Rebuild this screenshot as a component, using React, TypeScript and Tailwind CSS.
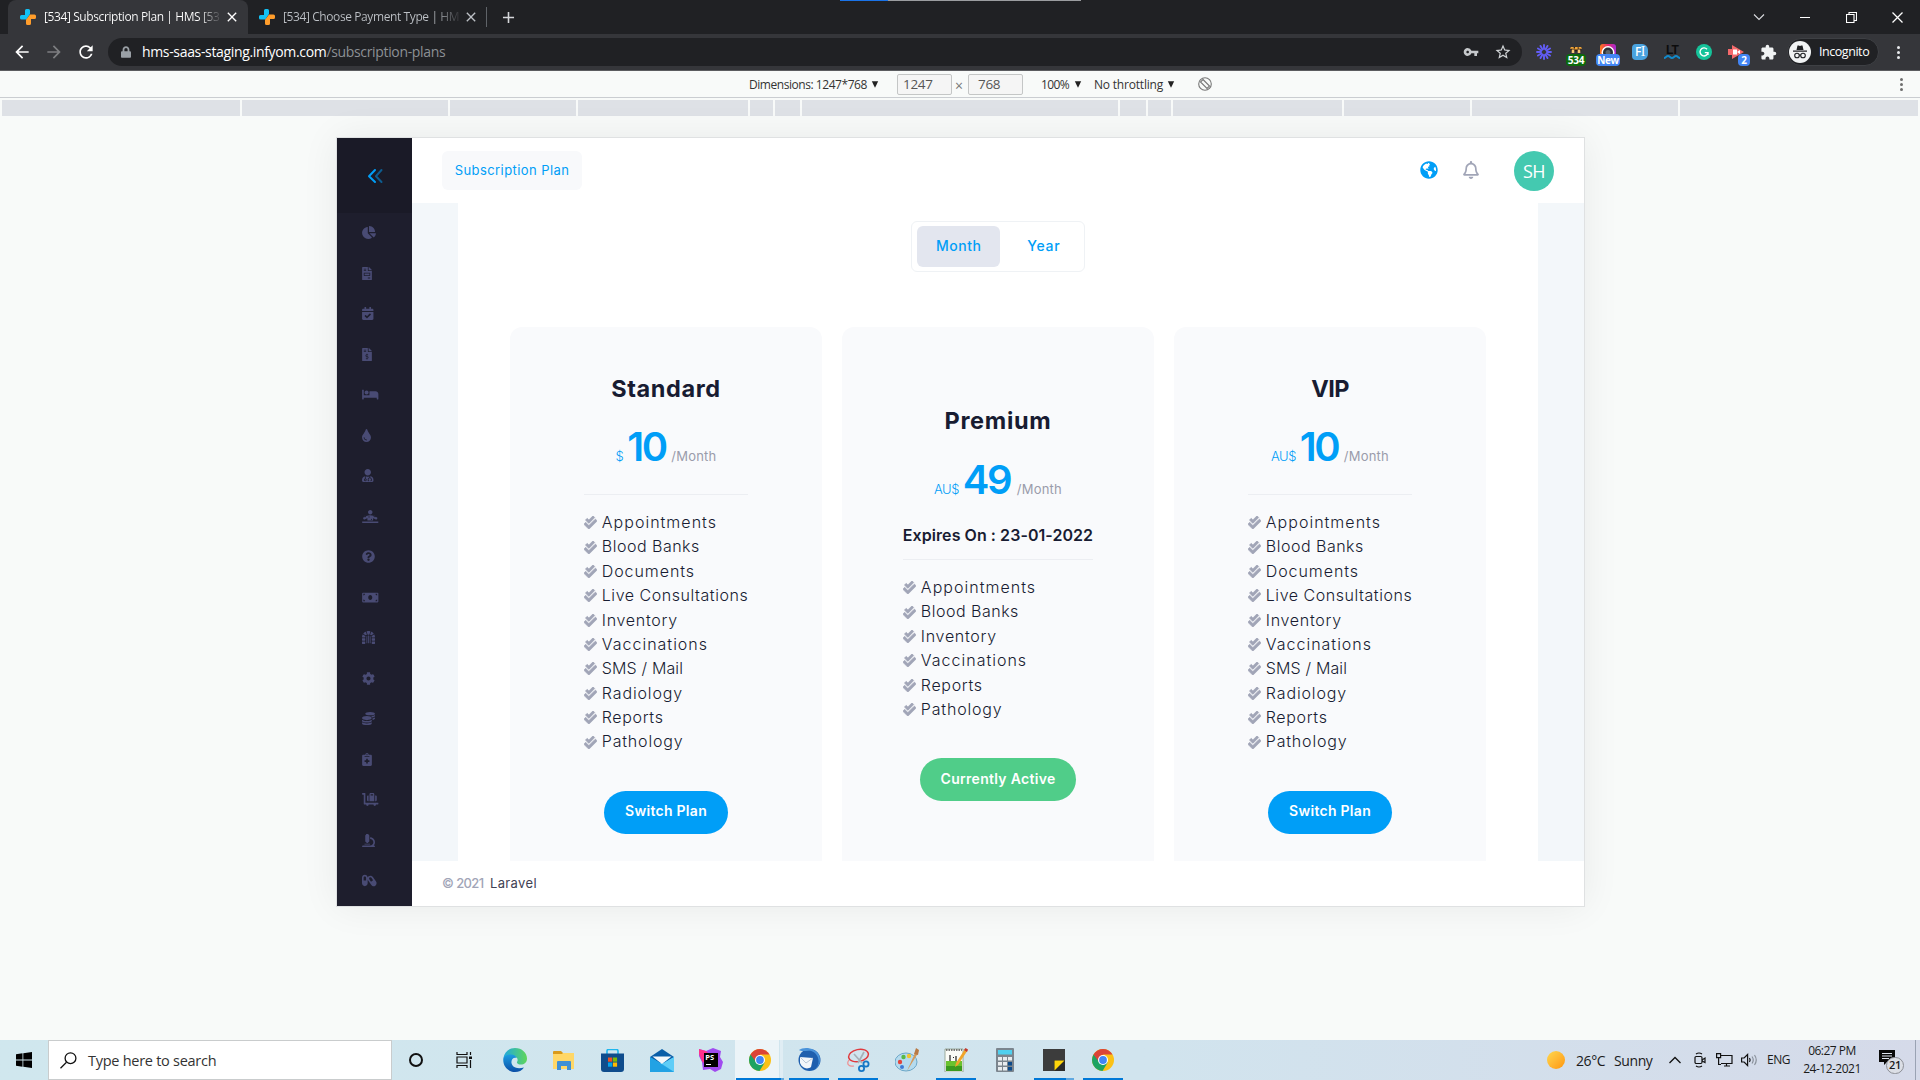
import type { ReactNode } from "react";
import type { IconType } from "react-icons";
import {
  FaChartPie, FaFileInvoice, FaCalendarCheck, FaFileInvoiceDollar, FaBed, FaTint, FaUserMd, FaDiagnoses,
  FaQuestionCircle, FaMoneyBill, FaDungeon, FaCog, FaCoins, FaNotesMedical, FaLuggageCart, FaMicroscope,
  FaCapsules, FaGlobeAmericas, FaRegBell, FaCheckDouble, FaLock,
} from "react-icons/fa";
import { MdArrowBack, MdArrowForward, MdRefresh, MdVpnKey, MdStarBorder, MdExtension, MdClose, MdAdd } from "react-icons/md";

const sideIcons: [IconType, string][] = [
  [FaChartPie, "w-[14px]"],
  [FaFileInvoice, "w-[10px]"],
  [FaCalendarCheck, "w-[11.5px]"],
  [FaFileInvoiceDollar, "w-[10px]"],
  [FaBed, "w-[16.5px]"],
  [FaTint, "w-[9px]"],
  [FaUserMd, "w-[11.5px]"],
  [FaDiagnoses, "w-[16.5px]"],
  [FaQuestionCircle, "w-[13px]"],
  [FaMoneyBill, "w-[16.5px]"],
  [FaDungeon, "w-[13px]"],
  [FaCog, "w-[13px]"],
  [FaCoins, "w-[13px]"],
  [FaNotesMedical, "w-[10px]"],
  [FaLuggageCart, "w-[16.5px]"],
  [FaMicroscope, "w-[13px]"],
  [FaCapsules, "w-[14.6px]"],
];

const tracking: Record<string, string> = {
  Appointments: "tracking-[1.02px]",
  "Blood Banks": "tracking-[0.5px]",
  Documents: "tracking-[0.92px]",
  "Live Consultations": "tracking-[0.54px]",
  Inventory: "tracking-[0.7px]",
  Vaccinations: "tracking-[1px]",
  "SMS / Mail": "tracking-[0.15px]",
  Radiology: "tracking-[0.88px]",
  Reports: "tracking-[0.65px]",
  Pathology: "tracking-[0.82px]",
};

interface Plan {
  name: string;
  nameClass: string;
  currency: string;
  amount: string;
  amountClass: string;
  expires?: string;
  features: string[];
  active?: boolean;
}

const full = ["Appointments", "Blood Banks", "Documents", "Live Consultations", "Inventory", "Vaccinations", "SMS / Mail", "Radiology", "Reports", "Pathology"];
const plans: Plan[] = [
  { name: "Standard", nameClass: "tracking-[0.6px]", currency: "$", amount: "10", amountClass: "w-[40px] tracking-[-2.6px]", features: full },
  { name: "Premium", nameClass: "tracking-[0.7px]", currency: "AU$", amount: "49", amountClass: "w-[50px] tracking-[-2.4px]", expires: "Expires On : 23-01-2022", features: ["Appointments", "Blood Banks", "Inventory", "Vaccinations", "Reports", "Pathology"], active: true },
  { name: "VIP", nameClass: "tracking-[-0.6px]", currency: "AU$", amount: "10", amountClass: "w-[40px] tracking-[-2.6px]", features: full },
];

function Favicon() {
  return (
    <svg className="h-4 w-4 shrink-0" viewBox="0 0 16 16">
      <path d="M6.500 0h2A1.500 1.500 0 0 1 10 1.500V5L6 11V10.500H1.500A1.500 1.500 0 0 1 0 9V7.500A1.500 1.500 0 0 1 1.500 6H5V1.500A1.500 1.500 0 0 1 6.500 0Z" fill="#12c2f5" />
      <path d="M9.500 16h-2A1.500 1.500 0 0 1 6 14.500V10.800L10 5.500H14.500A1.500 1.500 0 0 1 16 7V8.500A1.500 1.500 0 0 1 14.500 10H11V14.500A1.500 1.500 0 0 1 9.500 16Z" fill="#ff9d2b" />
    </svg>
  );
}

function TabStrip() {
  return (
    <div className="flex h-[34px] items-center bg-[#202124]">
      <div className="ml-2 flex h-full w-[240px] items-center rounded-t-lg bg-[#35363a] pl-3 text-white">
        <Favicon />
        <span className="ml-2 w-[176px] overflow-hidden whitespace-nowrap bg-gradient-to-r from-white from-88% to-[#4a4b4f] bg-clip-text text-xs tracking-[-0.4px] text-transparent">[534] Subscription Plan | HMS [53</span>
        <MdClose className="ml-1 h-4 w-4" />
      </div>
      <div className="ml-[11px] flex h-full w-[228px] items-center border-r border-transparent text-[#bdc1c6]">
        <Favicon />
        <span className="ml-2 w-[176px] overflow-hidden whitespace-nowrap bg-gradient-to-r from-[#bdc1c6] from-85% to-[#35363a] bg-clip-text text-xs tracking-[-0.4px] text-transparent">[534] Choose Payment Type | HM</span>
        <MdClose className="ml-1 h-4 w-4" />
      </div>
      <div className="-ml-px h-5 w-px bg-[#5f6368]" />
      <MdAdd className="ml-3 h-[19px] w-[19px] text-[#d5d7da]" />
      <div className="ml-auto flex items-center pr-[17px] text-white">
        <svg width="12" height="8" viewBox="0 0 12 8" className="mr-[35px]" fill="none" stroke="#dadce0" strokeWidth="1.1"><path d="M1 1.500 6 6.500 11 1.500" /></svg>
        <div className="mr-[36px] h-px w-[10px] bg-white" />
        <svg width="11" height="11" viewBox="0 0 11 11" className="mr-[35px]" fill="none" stroke="#fff" strokeWidth="1.1"><path d="M.5 2.500h7.500v8H.5zM3 2.500V.5h7.500v8H8" /></svg>
        <svg width="11" height="11" viewBox="0 0 11 11" fill="none" stroke="#fff" strokeWidth="1.300"><path d="m.5.5 10 10M10.500.5l-10 10" /></svg>
      </div>
    </div>
  );
}

function ExtSlot({ children }: { children: ReactNode }) {
  return <div className="relative flex h-7 w-8 items-center justify-center">{children}</div>;
}

function Toolbar() {
  return (
    <div className="flex h-[37px] items-center border-b border-[#5b5c60] bg-[#35363a] pl-3">
      <MdArrowBack className="h-5 w-5 text-white" />
      <MdArrowForward className="ml-3 h-5 w-5 text-[#7d7e81]" />
      <MdRefresh className="ml-3 h-5 w-5 text-white" />
      <div className="ml-3 flex h-7 w-[1414px] items-center rounded-full bg-[#202124] pl-[13px] pr-[10px]">
        <FaLock className="h-[12px] w-[10px] text-[#9aa0a6]" />
        <span className="ml-[11px] text-sm tracking-[-0.34px] text-white">hms-saas-staging.infyom.com<span className="text-[#8c9094]">/subscription-plans</span></span>
        <MdVpnKey className="ml-auto h-4 w-4 text-[#c6c9cc]" />
        <MdStarBorder className="ml-[15px] h-[18px] w-[18px] text-[#d0d3d6]" />
      </div>
      <div className="ml-[6px] flex">
        <ExtSlot>
          <svg width="16" height="16" viewBox="-8 -8 16 16" stroke="#625df5" strokeWidth="1.900" strokeLinecap="round">
            {[0, 30, 60, 90, 120, 150].map((a) => <path key={a} d="M0-7V-3M0 3V7" transform={`rotate(${a})`} />)}
          </svg>
        </ExtSlot>
        <ExtSlot>
          <svg width="12" height="8" viewBox="0 0 14 9" className="-mt-1"><path d="M1 1h12v5H1z" fill="#2b1a10" /><path d="M1 1h3l1 2H0zM6 1h3v3H5zM10 1h3l1 2h-4z" fill="#f2a73b" /><path d="M2 4h3v4H2zM9 4h3v4H9z" fill="#f7c977" /></svg>
          <span className="absolute left-1.5 top-4 flex h-3 w-5 items-center justify-center rounded-sm bg-[#0b6b0b] text-[10px] font-bold tracking-[-0.3px] text-white">534</span>
        </ExtSlot>
        <ExtSlot>
          <svg width="16" height="16" viewBox="0 0 16 16"><defs><linearGradient id="insta" x1="0" x2="1"><stop stopColor="#ff7a1a" /><stop offset=".5" stopColor="#e8286f" /><stop offset="1" stopColor="#a32cd6" /></linearGradient></defs><rect width="16" height="16" rx="3" fill="url(#insta)" /><circle cx="8" cy="8.500" r="6.500" fill="#fff" /><circle cx="8" cy="8.500" r="5" fill="#2c3137" /><circle cx="8" cy="8.500" r="2.500" fill="#5b636c" /></svg>
          <span className="absolute left-1 top-4 flex h-3 w-6 items-center justify-center rounded-sm bg-[#4285f4] text-[10px] font-bold tracking-[-0.3px] text-white">New</span>
        </ExtSlot>
        <ExtSlot>
          <div className="flex h-4 w-4 items-center justify-center rounded-l-sm rounded-r-md bg-[#4aa3df] text-xs font-semibold tracking-[-0.5px] text-white">F<span className="font-['Liberation_Serif'] text-[14px] font-normal">I</span></div>
        </ExtSlot>
        <ExtSlot>
          <div className="flex flex-col items-center font-['Liberation_Sans'] text-[12px] font-bold leading-[10px] tracking-[-1px] text-[#0c0c0d]">LT
            <svg width="16" height="4" viewBox="0 0 16 4" fill="none" stroke="#1289c9" strokeWidth="1.800"><path d="M0 3c2 0 2-2 4-2s2 2 4 2 2-2 4-2 2 2 4 2" /></svg>
          </div>
        </ExtSlot>
        <ExtSlot>
          <svg width="16" height="16" viewBox="0 0 16 16"><circle cx="8" cy="8" r="8" fill="#15c39a" /><path d="M11 5.200A4 4 0 1 0 12 8.600H8.800M12 8.600v2.400" fill="none" stroke="#fff" strokeWidth="1.400" /></svg>
        </ExtSlot>
        <ExtSlot>
          <svg width="16" height="14" viewBox="0 0 16 14"><path d="M0 4h4V0l12 7-12 7v-4H0z" fill="#f4696b" /><path d="M5 4.500h4v5H5z" fill="#fff" /><path d="M9 7l3-2v4z" fill="#fff" /></svg>
          <span className="absolute left-[18px] top-4 flex h-3 w-3 items-center justify-center rounded-sm bg-[#4285f4] text-[10px] font-bold text-white">2</span>
        </ExtSlot>
        <ExtSlot><MdExtension className="h-[17px] w-[17px] text-[#f1f3f4]" /></ExtSlot>
      </div>
      <div className="ml-[3px] flex h-7 w-[92px] items-center rounded-full border border-[#3e4044] bg-[#202124] pl-px">
        <svg width="22" height="22" viewBox="0 0 22 22"><circle cx="11" cy="11" r="11" fill="#f1f3f4" /><path d="M7.500 9 8.500 4.500h1.200L11 5l1.300-.5h1.200l1 4.500zM4 9.500h14v1.200H4z" fill="#202124" /><g fill="none" stroke="#202124" strokeWidth="1.100"><circle cx="8" cy="14.500" r="2.300" /><circle cx="14" cy="14.500" r="2.300" /><path d="M10.300 14.200q.7-.5 1.400 0" /></g></svg>
        <span className="ml-2 text-[12.5px] tracking-[-0.45px] text-white">Incognito</span>
      </div>
      <div className="ml-[18px] flex flex-col gap-[2px]">{[0, 1, 2].map((i) => <span key={i} className="h-[3px] w-[3px] rounded-full bg-[#e8eaed]" />)}</div>
    </div>
  );
}

const Caret = ({ className }: { className: string }) => (
  <svg width="8" height="7" viewBox="0 0 8 7" className={className}><path d="M.8.3h6.400L4 6.800z" fill="#222" /></svg>
);

function DeviceBar() {
  return (
    <div className="flex h-[27px] items-center border-b border-[#cacdd1] pl-[749px] text-xs text-[#333]">
      <span className="w-[122px] whitespace-nowrap pt-px tracking-[-0.45px]">Dimensions: 1247*768</span>
      <Caret className="w-2" />
      <div className="ml-[18px] h-[21px] w-[55px] rounded-xs border border-[#c4c6c6] bg-[#f5f5f5] pl-[5px] text-[13.5px] leading-[18px] tracking-[-0.3px] text-[#555]">1247</div>
      <span className="mx-px mt-1 w-3 text-center text-sm leading-4 text-[#777]">×</span>
      <div className="ml-0.5 h-[21px] w-[55px] rounded-xs border border-[#c4c6c6] bg-[#f5f5f5] pl-[9px] text-[13.5px] leading-[18px] tracking-[-0.3px] text-[#555]">768</div>
      <span className="ml-[18px] w-[33px] pt-px tracking-[-0.6px]">100%</span>
      <Caret className="w-2" />
      <span className="ml-3 w-[73px] whitespace-nowrap pt-px tracking-[-0.2px]">No throttling</span>
      <Caret className="w-2" />
      <svg width="14" height="14" viewBox="0 0 14 14" className="ml-[23px]" fill="none" stroke="#777" strokeWidth="1.100"><circle cx="7" cy="7" r="6.300" /><path d="m5 2.500 6.500 6.500-2.500 2.500L2.500 5z" /></svg>
      <div className="ml-auto mr-[17px] flex flex-col gap-[2px]">{[0, 1, 2].map((i) => <span key={i} className="h-[3px] w-[3px] rounded-full bg-[#6e6e6e]" />)}</div>
    </div>
  );
}

const rulerSegments = [238, 206, 126, 170, 23, 25, 316, 26, 23, 169, 126, 206, 238];

function Ruler() {
  return (
    <div className="mt-[2px] flex h-4 gap-[2px] px-[2px]">
      {rulerSegments.map((w, i) => <div key={i} className="bg-[#dee1e6]" style={{ width: w }} />)}
    </div>
  );
}

function Sidebar() {
  return (
    <div className="w-[75px] bg-[#1e1e2d]">
      <div className="flex h-[75px] items-center justify-center bg-[#1a1a27]">
        <svg width="16" height="16" viewBox="0 0 16 16" className="ml-px" fill="none" stroke="#009ef7" strokeWidth="2" strokeLinecap="round" strokeLinejoin="round">
          <path d="M8 2 2 8.200 8 14" /><path d="M14.500 2 9 8.200 14.500 14" opacity=".5" />
        </svg>
      </div>
      {sideIcons.map(([Icon, width], i) => (
        <div key={i} className="flex h-[40.5px] items-center pb-px pl-[25px] text-[#494b74]"><Icon className={`h-[13px] ${width}`} /></div>
      ))}
    </div>
  );
}

function PlanCard({ plan }: { plan: Plan }) {
  return (
    <div className={`flex w-[312px] flex-col items-center rounded-t-xl bg-[#f9fafc] ${plan.active ? "pt-[80px]" : "pt-[48px]"}`}>
      <h2 className={`text-[23.5px] font-bold leading-7 text-[#181c32] ${plan.nameClass}`}>{plan.name}</h2>
      <div className="flex flex-col">
        <div className={`flex h-12 items-baseline justify-center leading-[48px] text-[#009ef7] ${plan.active ? "mt-[21px]" : "mt-5"}`}>
          <span className="mr-1 text-[13px] font-light tracking-[-0.5px]">{plan.currency}</span>
          <span className={`text-[40px] font-semibold ${plan.amountClass}`}>{plan.amount}</span>
          <span className="ml-1 text-[13px] tracking-[0.2px] text-[#9a9cab]">/Month</span>
        </div>
        {plan.expires && <div className="mt-[19px] whitespace-nowrap text-base font-semibold leading-6 tracking-[0.06px] text-[#181c32]">{plan.expires}</div>}
        <div className={`h-px w-full bg-[#eceef2] ${plan.active ? "mt-3" : "mt-[23px]"}`} />
        <ul className="mt-[15px] text-base font-light leading-[24.375px] text-[#181c32]">
          {plan.features.map((f) => (
            <li key={f} className="flex items-center whitespace-nowrap">
              <FaCheckDouble className="mr-[5px] mt-px h-[13px] w-[13px] text-[#a1a5b7]" stroke="currentColor" strokeWidth="28" />
              <span className={tracking[f]}>{f}</span>
            </li>
          ))}
        </ul>
      </div>
      {plan.active ? (
        <button className="mt-[37px] flex h-[43px] w-[156px] items-center justify-center rounded-[22px] bg-[#50cd89] pb-[2px] text-sm font-semibold tracking-[0.3px] text-white">Currently Active</button>
      ) : (
        <button className="mt-[37px] flex h-[43px] w-[124px] items-center justify-center rounded-[22px] bg-[#009ef7] pb-[3px] text-sm font-semibold tracking-[0.28px] text-white">Switch Plan</button>
      )}
    </div>
  );
}

function HmsApp() {
  return (
    <div className="ml-[337px] mt-[22px] flex h-[768px] w-[1247px] bg-white font-[Inter,sans-serif] shadow-[0_0_0_1px_#dfe1e2,0_0_36px_rgba(0,0,0,0.07)]">
      <Sidebar />
      <div className="flex flex-1 flex-col">
        <header className="flex h-[65px] items-center px-[30px]">
          <div className="flex h-[39px] w-[140px] items-center justify-center rounded-md bg-[#f8f9fb] text-[13px] tracking-[0.42px] text-[#009ef7]">Subscription Plan</div>
          <FaGlobeAmericas className="-mt-px ml-auto h-[18px] w-[18px] text-[#009ef7]" />
          <FaRegBell className="-mt-px ml-6 h-[18px] w-[18px] text-[#a1a5b7]" />
          <div className="ml-[34px] mt-px flex h-10 w-10 items-center justify-center rounded-full bg-[#44c9b0] font-['Open_Sans'] text-lg tracking-[-0.6px] text-white">SH</div>
        </header>
        <main className="flex h-[658px] flex-col overflow-hidden bg-[#f3f7fa] px-[46px]">
          <div className="flex flex-1 flex-col items-center bg-white">
            <div className="mt-[18px] flex h-[51px] w-[174px] shrink-0 items-center rounded-md border border-[#eff2f5] pl-[5px] text-sm font-medium text-[#009ef7]">
              <div className="flex h-[41px] w-[84px] items-center justify-center rounded-md bg-[#e3e6ef] pb-0.5 tracking-[0.5px]">Month</div>
              <div className="flex h-[41px] w-[84px] items-center justify-center pb-0.5 pl-[3px] tracking-[0.7px]">Year</div>
            </div>
            <div className="mt-[55px] flex flex-1 gap-5">{plans.map((p) => <PlanCard key={p.name} plan={p} />)}</div>
          </div>
        </main>
        <footer className="flex flex-1 items-center pl-[30px] text-[13px] font-medium">
          <span className="w-[48px] tracking-[-0.6px] text-[#a1a5b7]">© 2021</span>
          <span className="font-normal tracking-[0.35px] text-[#3f4254]">Laravel</span>
        </footer>
      </div>
    </div>
  );
}

function Chrome() {
  return (
    <svg width="22" height="22" viewBox="0 0 22 22">
      <circle cx="11" cy="11" r="11" fill="#fbc116" />
      <path d="M11 11 1.500 5.500A11 11 0 0 0 10.500 22l5.200-8.500z" fill="#1da362" />
      <path d="M1.500 5.500A11 11 0 0 1 20.500 5.500H11L7 13z" fill="#db4437" />
      <circle cx="11" cy="11" r="5" fill="#fff" /><circle cx="11" cy="11" r="3.900" fill="#4285f4" />
    </svg>
  );
}

const taskIcons: { icon: ReactNode; state?: "open" | "front" | "stack" }[] = [
  { icon: <svg width="14" height="16" viewBox="0 0 14 16" className="-ml-0.5"><circle cx="7" cy="8" r="6" fill="none" stroke="#111" strokeWidth="2" /></svg> },
  { icon: <svg width="16" height="16" viewBox="0 0 16 16" className="-ml-1" fill="none" stroke="#111" strokeWidth="1.200"><path d="M1 0v2.500h10V0M1 16v-2.500h10V16M1 5h10v6H1zM14.500 0v3M14.500 8v8" /><path d="M13 4.500h3v2.500h-3z" fill="#111" stroke="none" /></svg> },
  { icon: <svg width="24" height="24" viewBox="0 0 24 24"><defs><linearGradient id="edgeTop"><stop stopColor="#1fa8e0" /><stop offset="1" stopColor="#5fd65a" /></linearGradient><linearGradient id="edgeLow" x2="0" y2="1"><stop stopColor="#1b9de2" /><stop offset="1" stopColor="#0c4fa6" /></linearGradient></defs><path d="M.4 10C1.500 4 6.300 0 12 0c7 0 12 5 12 10.500 0 4-3 6-6 6-2.500 0-4.500-1-4-2.500 1.500-2 .5-5.500-3.500-6C6 7.500 2 8.500.4 10z" fill="url(#edgeTop)" /><path d="M.4 10C2 7.500 5 6.500 8 6.500c3 0 5 1.500 5.800 3.500C10 9 8 12 8.500 15c.7 4 5 6.500 12.500 4.500C19 22.500 15.800 24 12 24 5 24-.8 18 .4 10z" fill="url(#edgeLow)" /></svg> },
  { icon: <svg width="21" height="19" viewBox="0 0 21 19"><path d="M0 1a1 1 0 0 1 1-1h7l2 2v3H0z" fill="#d99a1b" /><path d="M0 3h9l1-1h11v16H0z" fill="#ffd767" /><path d="M4 19v-8a1 1 0 0 1 1-1h12a1 1 0 0 1 1 1v8h-4v-4H8v4z" fill="#3f90d6" /></svg> },
  { icon: <svg width="23" height="23" viewBox="0 0 23 23"><path d="M6 5V2a1.500 1.500 0 0 1 1.500-1.500h8A1.500 1.500 0 0 1 17 2v3" fill="none" stroke="#1fb6ee" strokeWidth="1.600" /><path d="M0 4.500h23V20a3 3 0 0 1-3 3H3a3 3 0 0 1-3-3z" fill="#0f4c8c" /><path d="M7 8.500h4.200v4.200H7z" fill="#f25022" /><path d="M11.900 8.500h4.200v4.200h-4.200z" fill="#7fba00" /><path d="M7 13.500h4.200v4.200H7z" fill="#00a4ef" /><path d="M11.900 13.500h4.200v4.200h-4.200z" fill="#ffb900" /></svg> },
  { icon: <svg width="24" height="23" viewBox="0 0 24 23"><path d="M0 8 12 0l12 8v6H0z" fill="#0a5ea8" /><path d="M2.500 7.500h19L12 15z" fill="#f4f8fb" /><path d="M0 8l12 7 12-7v15H0z" fill="#2bb4ee" /><path d="M12 15 24 8v15z" fill="#5fcdf7" /><path d="m0 8 24 15H0z" fill="#1c93dc" opacity=".55" /></svg> },
  { icon: <svg width="24" height="24" viewBox="0 0 24 24"><path d="m0 1 7 2 7-3 8 3-1 6 3 5-2 7-6 3-5-3-7 1-1-8-3-6z" fill="#a04bf0" /><path d="m0 1 7 2 3 3-6 9-1-2-3-7z" fill="#ff318c" /><path d="M5 5h14v14H5z" fill="#000" /><text x="6.300" y="12" fill="#fff" fontSize="7.500" fontWeight="700" fontFamily="Open Sans">PS</text><path d="M7 16h5v1H7z" fill="#fff" /></svg> },
  { icon: <Chrome />, state: "front" },
  { icon: <svg width="24" height="24" viewBox="0 0 24 24"><circle cx="12.500" cy="12" r="11" fill="#1f5fae" /><path d="M2 2c4 3 11-2 16 3s5 13-1 17C25 17 25 6 17 2 11-1 5 0 2 2z" fill="#4a93da" /><path d="m3 9 13 1-2 9c-4 3-9 1-11-4z" fill="#f3f6fa" /><path d="m3 9 6 6 7-5" fill="none" stroke="#b9c8d8" /></svg>, state: "open" },
  { icon: <svg width="24" height="24" viewBox="0 0 24 24" fill="none"><ellipse cx="12.500" cy="7.500" rx="10" ry="6" transform="rotate(-12 12.500 7.500)" stroke="#e03a3e" strokeWidth="1.500" /><path d="M3 12c-3 4 0 7 5 6" stroke="#ef8f91" strokeWidth="1.200" /><path d="m8 6 8 9M18 4 12 15" stroke="#a8b0b8" strokeWidth="1.700" /><circle cx="20" cy="16" r="2.600" stroke="#1677c5" strokeWidth="1.800" /><circle cx="15.500" cy="20.500" r="2.600" stroke="#1677c5" strokeWidth="1.800" /></svg>, state: "open" },
  { icon: <svg width="24" height="24" viewBox="0 0 24 24"><ellipse cx="11" cy="14" rx="11" ry="9" fill="#b5dbee" stroke="#6ca7c8" /><circle cx="5" cy="14" r="2.200" fill="#e2453c" /><circle cx="8.500" cy="9" r="2.200" fill="#58b946" /><circle cx="14" cy="8" r="2.200" fill="#f3c330" /><circle cx="7" cy="19" r="2" fill="#3d7bd6" /><path d="m12 23 8-18 2.500 1z" fill="#d49a5b" /><path d="m19 6 2-6 3 2-1 5z" fill="#b97a45" /></svg> },
  { icon: <svg width="24" height="24" viewBox="0 0 24 24"><path d="M1 1h18v23H1z" fill="#fbfcf7" stroke="#8a9a86" strokeWidth=".8" /><path d="M2 13h16v10H2z" fill="#6ac22f" /><path d="M2 18h16v5H2z" fill="#3a9a1f" /><path d="M2 2h16" stroke="#555" strokeWidth="1.500" strokeDasharray="1.500 1" /><path d="M6 7v6M9 9.500h1M12 8v5" stroke="#222" strokeWidth="1.200" /><path d="m11 19 1-4L21 1l2.500 1.500L14 17z" fill="#f0a52a" /><path d="m20 2 1.500-2L24 1.500 23 4z" fill="#c23b2e" /></svg>, state: "open" },
  { icon: <svg width="18" height="24" viewBox="0 0 18 24"><rect width="18" height="24" rx="1" fill="#7b858e" /><path d="M2 2h14v4.500H2z" fill="#4fd0ef" />{[9, 14, 19].map((y) => [2, 7, 12].map((x) => <path key={`${x}-${y}`} d={`M${x} ${y}h4v3.500h-4z`} fill={x === 12 && y > 9 ? "#0c4a8a" : "#e8ecef"} />))}</svg> },
  { icon: <svg width="22" height="22" viewBox="0 0 22 22"><path d="M0 0h22v11L11 22H0z" fill="#3c3c3c" /><path d="M11 11h11v11H11z" fill="#2a2a2a" /><path d="M11.500 11.500H21.500L11.500 21.500z" fill="#ffd60a" /></svg>, state: "stack" },
  { icon: <Chrome />, state: "open" },
];

function Taskbar() {
  return (
    <div className="mt-auto flex h-10 items-center bg-gradient-to-r from-[#d0e7ee] via-[#d1e4ee] via-60% to-[#d5dae9] text-[#1b1b1b]">
      <div className="flex w-12 justify-center">
        <svg width="16" height="16" viewBox="0 0 16 16"><path d="M0 2.200 6.500 1.300V7.600H0zM7.300 1.200 16 0V7.600H7.300zM0 8.400H6.500V14.700L0 13.800zM7.300 8.400H16V16L7.300 14.800z" fill="#000" /></svg>
      </div>
      <div className="flex h-10 w-[344px] items-center border border-[#c9cccd] bg-white pl-[11px] text-[14.5px] tracking-[-0.27px] text-[#333]">
        <svg width="17" height="17" viewBox="0 0 17 17" fill="none" stroke="#111" strokeWidth="1.300"><circle cx="10.500" cy="6.200" r="5.400" /><path d="M6.500 10.200.5 16.300" /></svg>
        <span className="ml-[11px] pt-[2px]">Type here to search</span>
      </div>
      {taskIcons.map((t, i) => (
        <div key={i} className="relative flex h-10 w-[49px] items-center justify-center">
          {t.state === "front" && <div className="absolute left-0 top-0 flex h-10 w-[48px] gap-px"><div className="w-[44px] bg-[#ecf4f8]" /><div className="w-[3px] bg-[#e0edf4]" /></div>}
          <div className="relative">{t.icon}</div>
          {t.state === "front" && <div className="absolute bottom-0 left-px flex h-[2px] w-12"><div className="flex-1 bg-[#0078d7]" /><div className="w-[3px] bg-[#60a8e0]" /></div>}
          {t.state === "open" && <div className="absolute bottom-0 left-[5px] h-[2px] w-10 bg-[#0078d7]" />}
          {t.state === "stack" && <div className="absolute bottom-0 left-[5px] flex h-[2px] w-10"><div className="flex-1 bg-[#0078d7]" /><div className="w-2 bg-[#60a8e0]" /></div>}
        </div>
      ))}
      <div className="ml-auto flex items-center">
        <div className="h-[18px] w-[18px] rounded-full bg-gradient-to-br from-[#ffd84d] to-[#ff9500]" />
        <span className="ml-[11px] w-[38px] pt-[2px] text-sm tracking-[-0.4px]">26°C</span>
        <span className="w-[55px] pt-[2px] text-sm tracking-[-0.4px]">Sunny</span>
        <svg width="12" height="8" viewBox="0 0 12 8" fill="none" stroke="#111" strokeWidth="1.300"><path d="M.5 7 6 1.500 11.500 7" /></svg>
        <svg width="12" height="16" viewBox="0 0 12 16" className="ml-[13px]" fill="none" stroke="#111" strokeWidth="1.200"><rect x="1" y="4.500" width="7" height="7" rx="1.200" /><path d="M8 8l3-2v4.500L8 9M2 2Q5 0 8 2M2 14Q5 16 8 14" /></svg>
        <svg width="17" height="14" viewBox="0 0 17 14" className="ml-[10px]" fill="none" stroke="#111" strokeWidth="1.200"><path d="M5 2.500h11v8H5M.6.6h4v4h-4zM2.600 5v6.500H5M8 13h6M10.500 10.500V13" /></svg>
        <svg width="17" height="14" viewBox="0 0 17 14" className="ml-2" fill="none" stroke="#111" strokeWidth="1.200"><path d="M.6 5h2.500l3.500-3.500v11L3.100 9H.6zM8.500 5q1.300 2 0 4" /><path d="M11 3.500q2.500 3.500 0 7M13.500 2q3.500 5 0 10" stroke="#8a919b" /></svg>
        <span className="ml-[9px] w-[33px] text-xs tracking-[-0.45px]">ENG</span>
        <div className="flex w-[64px] flex-col items-center text-xs leading-[18px] tracking-[-0.5px]"><span>06:27 PM</span><span>24-12-2021</span></div>
        <div className="relative ml-[15px] h-[24px] w-[25px]">
          <svg width="16" height="16" viewBox="0 0 16 16" className="mt-0.5"><path d="M0 0h16v12H8l-3 3v-3H0z" fill="#0a0a0a" /><path d="M3 3.500h10M3 6h10M3 8.500h7" stroke="#dfe4ee" /></svg>
          <span className="absolute left-[7px] top-[9px] flex h-[17px] w-[18px] items-center justify-center rounded-full border border-[#8c8f96] bg-[#dcdfe6] text-[11px] font-semibold tracking-[-0.4px]">21</span>
        </div>
        <div className="ml-[11px] h-10 w-px bg-[#9aa3b3]" />
        <div className="w-1" />
      </div>
    </div>
  );
}

export default function App() {
  return (
    <div className="relative flex h-[1080px] w-[1920px] flex-col overflow-hidden bg-[#f8faf9] font-['Open_Sans',sans-serif]">
      <TabStrip />
      <Toolbar />
      <DeviceBar />
      <Ruler />
      <HmsApp />
      <Taskbar />
      <div className="absolute left-[840px] top-0 flex h-px w-[241px]"><div className="w-12 bg-[#1a73e8]" /><div className="flex-1 bg-[#9b9da0]" /></div>
    </div>
  );
}
